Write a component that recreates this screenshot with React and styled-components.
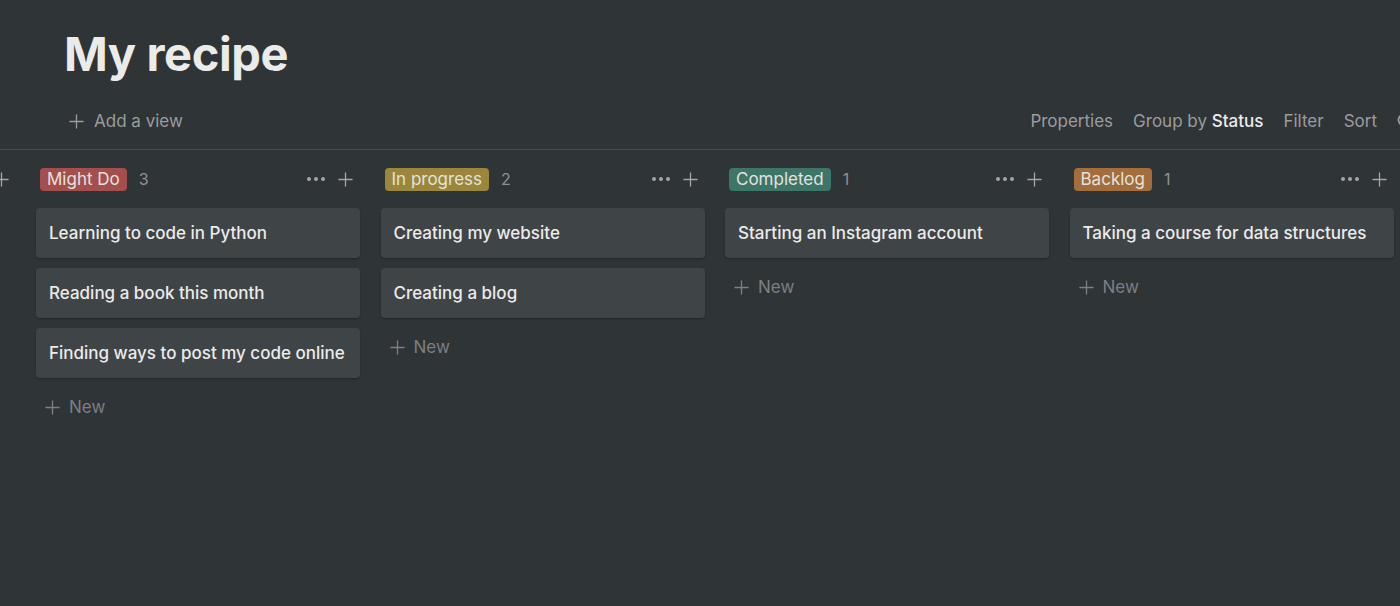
import React from 'react';
import styled, {createGlobalStyle} from 'styled-components';

const GlobalStyle = createGlobalStyle`
  html, body {
    margin: 0;
    padding: 0;
    background: #2f3437;
  }
  body {
    font-family: 'Inter', 'Noto Sans', sans-serif;
    color: #ebebea;
    -webkit-font-smoothing: antialiased;
  }
`;

const columns = [
  {name: '', color: 'transparent', items: [], ghost: true},
  {
    name: 'Might Do',
    color: '#a44f4e',
    items: [
      'Learning to code in Python',
      'Reading a book this month',
      'Finding ways to post my code online'
    ]
  },
  {
    name: 'In progress',
    color: '#9a873b',
    items: ['Creating my website', 'Creating a blog']
  },
  {name: 'Completed', color: '#3d7568', items: ['Starting an Instagram account']},
  {name: 'Backlog', color: '#a36d3c', items: ['Taking a course for data structures']}
];

const PlusIcon = ({size = 16}) => (
  <svg width={size} height={size} viewBox="0 0 16 16" fill="none">
    <path d="M8 1v14M1 8h14" stroke="currentColor" strokeWidth="1.4" strokeLinecap="round" />
  </svg>
);

const DotsIcon = () => (
  <svg width="20" height="6" viewBox="0 0 20 6" fill="currentColor">
    <circle cx="3" cy="3" r="2" />
    <circle cx="10" cy="3" r="2" />
    <circle cx="17" cy="3" r="2" />
  </svg>
);

const SearchIcon = () => (
  <svg width="17" height="17" viewBox="0 0 17 17" fill="none">
    <circle cx="7" cy="7" r="5.5" stroke="currentColor" strokeWidth="1.8" />
    <path d="M11 11l4.5 4.5" stroke="currentColor" strokeWidth="1.8" strokeLinecap="round" />
  </svg>
);

export default function App() {
  return (
    <Page>
      <GlobalStyle />
      <Title>My recipe</Title>
      <Toolbar>
        <AddView>
          <PlusIcon size={15} />
          Add a view
        </AddView>
        <Actions>
          <Action>Properties</Action>
          <Action>
            Group by <strong>Status</strong>
          </Action>
          <Action>Filter</Action>
          <Action>Sort</Action>
          <SearchIcon />
        </Actions>
      </Toolbar>
      <Board>
        {columns.map((col, i) => (
          <Column key={i}>
            <Header>
              {col.ghost ? null : (
                <>
                  <Tag color={col.color}>{col.name}</Tag>
                  <Count>{col.items.length}</Count>
                </>
              )}
              <HeaderTools>
                <DotsIcon />
                <PlusIcon size={15} />
              </HeaderTools>
            </Header>
            {col.items.map(item => (
              <Card key={item}>{item}</Card>
            ))}
            {col.ghost ? null : (
              <NewRow>
                <PlusIcon size={15} />
                New
              </NewRow>
            )}
          </Column>
        ))}
      </Board>
    </Page>
  );
}

const Page = styled.div`
  width: 1400px;
  height: 606px;
  overflow: hidden;
`;

const Title = styled.h1`
  margin: 0;
  padding: 24px 0 0 64px;
  font-size: 47px;
  line-height: 60px;
  font-weight: 700;
  letter-spacing: -0.4px;
  color: #ebebea;
`;

const Toolbar = styled.div`
  display: flex;
  align-items: center;
  justify-content: space-between;
  height: 40px;
  margin-top: 17px;
  padding-left: 69px;
  border-bottom: 1px solid #474c50;
  padding-bottom: 8px;
  white-space: nowrap;
  font-size: 17px;
  color: #9b9c9d;
`;

const AddView = styled.div`
  display: flex;
  align-items: center;
  gap: 10px;
`;

const Actions = styled.div`
  display: flex;
  align-items: center;
  gap: 20px;
  margin-right: -14px;

  strong {
    font-weight: 500;
    color: #ebebea;
  }
`;

const Action = styled.span``;

const Board = styled.div`
  display: flex;
  gap: 20.5px;
  margin-left: -308.5px;
  padding-top: 17px;
`;

const Column = styled.div`
  flex: 0 0 324px;
  display: flex;
  flex-direction: column;
  gap: 10px;
`;

const Header = styled.div`
  display: flex;
  align-items: center;
  height: 24px;
  padding: 0 7px 0 4px;
  margin-bottom: 7px;
`;

const Tag = styled.span`
  background: ${p => p.color};
  color: #e4e2de;
  border-radius: 4px;
  padding: 0 7px;
  height: 23px;
  line-height: 23px;
  font-size: 17px;
`;

const Count = styled.span`
  margin-left: 12px;
  font-size: 16px;
  color: #8f9193;
`;

const HeaderTools = styled.div`
  margin-left: auto;
  display: flex;
  align-items: center;
  gap: 12px;
  color: #a4a5a6;
`;

const Card = styled.div`
  background: #3f4447;
  border-radius: 4px;
  box-shadow: 0 1px 2px rgba(0, 0, 0, 0.25);
  height: 50px;
  display: flex;
  align-items: center;
  padding: 0 13px;
  font-size: 17px;
  font-weight: 500;
  color: #ebebea;
  white-space: nowrap;
`;

const NewRow = styled.div`
  display: flex;
  align-items: center;
  gap: 9px;
  height: 38px;
  padding-left: 9px;
  font-size: 17px;
  color: #7d7f81;
`;
